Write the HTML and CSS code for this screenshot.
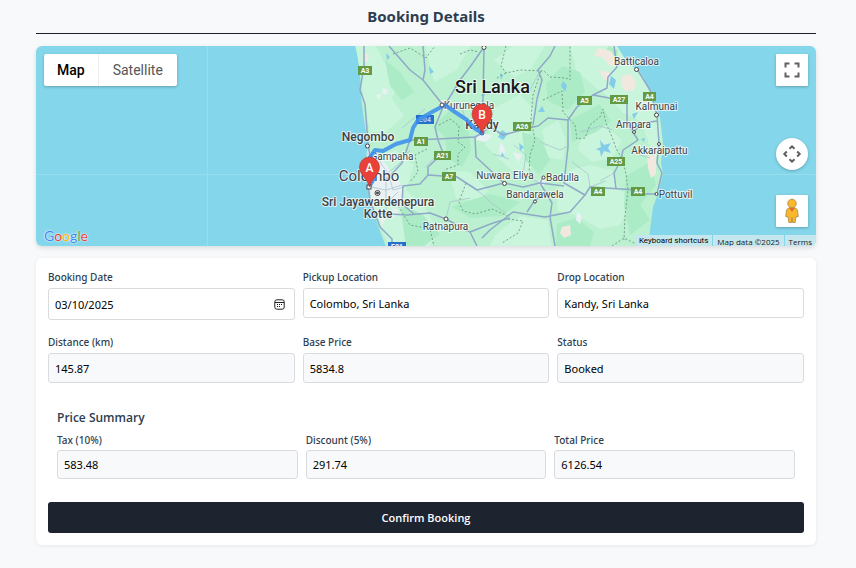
FILE: index.html
```html
<!DOCTYPE html>
<html lang="en">
<head>
<meta charset="utf-8">
<meta name="viewport" content="width=device-width, initial-scale=1">
<title>Booking Details</title>
<link rel="stylesheet" href="styles.css">
</head>
<body>
<main class="page">
  <h1 class="page-title">Booking Details</h1>

  <section class="map" aria-label="Route map">
    <svg class="map-canvas" viewBox="36 46 780 200" preserveAspectRatio="xMidYMid slice" role="img" aria-label="Route from Colombo to Kandy">
      <rect class="sea" x="-400" y="-100" width="1700" height="500"/>
      <path class="tile-line" d="M207.500 46V246M36 174.500H816"/>
      <path class="land" d="M355 46L358 58L360 70L361 97L364 120L367 137L367 150L365 173L368 188L370 197L377 223L386 247H648L650 230L653 207L658 194L663 174L661 163L663 143L660 117L650 90L643 76L637 70L631 69L625 60L617 46Z"/>
      <g class="land-light">
        <path d="M356 46H376L384 62L402 76L392 98L404 116L386 132L370 132L364 100L361 80Z"/>
        <path d="M425 46H470L457 70L434 82Z"/>
        <path d="M513 46H545L532 68L515 77L505 70L494 60Z"/>
        <path d="M570 46H617L627 62L640 72L652 98L660 127L662 150L650 148L642 122L622 112L608 96L596 88L576 70Z"/>
        <path d="M495 108L520 94L534 110L528 138L536 165L520 177L500 160L485 145Z"/>
        <path d="M542 130L558 120L566 140L563 160L548 158Z"/>
        <path d="M583 132L606 126L622 140L612 158L592 162L578 150Z"/>
        <path d="M570 170L590 165L612 170L620 190L632 200L620 225L600 229L575 215L557 211L558 190Z"/>
        <path d="M496 234L520 216L548 220L552 246H490Z"/>
        <path d="M372 158L395 150L414 165L406 190L424 206L438 232L430 246H389L377 220L370 197Z"/>
        <path d="M448 170L470 172L488 190L478 202L456 198Z"/>
      </g>
      <g class="land-deep">
        <path d="M452 108L468 128L471 150L462 167L447 158L445 137L434 126Z"/>
        <path d="M465 202L490 194L520 202L502 216L470 218L452 207Z"/>
        <path d="M546 84L562 66L580 72L585 92L568 110L548 101Z"/>
        <path d="M570 120L600 104L611 121L596 132L572 142Z"/>
        <path d="M626 176L650 162L656 185L640 205L650 220L630 235L624 205Z"/>
        <path d="M400 204L422 214L440 234L424 246H406Z"/>
        <path d="M522 132L540 138L550 160L539 174L525 160Z"/>
        <path d="M608 46L618 50L616 62L605 56Z"/>
        <path d="M385 60L400 72L414 92L402 100L390 86Z"/>
        <path d="M557 224L576 218L594 232L590 246H556Z"/>
      </g>
      <g class="sand">
        <path d="M598 48L611 51L619 64L610 66L602 57L594 56Z"/>
        <path d="M622 76L631 74L636 82L634 90L626 92L621 85Z"/>
        <path d="M599 70L609 72L611 83L604 79Z"/>
        <path d="M647 156L656 155L656 174L651 178L648 168Z"/>
        <path d="M562 227L570 225L571 235L564 238L560 233Z"/>
        <path d="M647 91L653 95L648 104L642 101Z"/>
        <path d="M364 52L369 56L367 63L363 60Z"/>
      </g>
      <g class="urban">
        <path d="M368 151L377 157L386 164L392 174L404 187L402 202L386 204L372 199L368 188Z"/>
        <path d="M478 132L493 136L485 142L476 140Z"/>
        <path d="M383 88L388 90L386 95L382 93ZM376 95L381 94L379 100ZM500 142L505 148L504 160L499 151ZM513 152L522 155L518 162ZM392 208L399 210L394 218ZM378 210L386 218L382 226ZM440 100L448 101L447 110L439 108ZM539 179L546 180L544 186L538 185ZM577 212L582 216L580 224L576 220Z"/>
      </g>
      <g class="water">
        <path d="M429 66L434 72L430 74ZM386 53L390 57L387 60ZM563 81L567 85L565 92L561 86ZM611 76L616 80L614 89L609 84ZM600 140L604 145L611 143L608 148L611 153L604 151L601 157L600 151L596 149L601 147ZM502 130L508 134L503 140L498 137ZM519 143L524 147L520 151ZM538 112L542 106L545 112ZM641 139L645 138L644 142ZM500 73L503 75L501 80ZM632 114L638 112L634 119ZM483 92L486 95L481 96ZM502 152L505 157L501 156Z"/>
      </g>
      <g class="borders">
        <path d="M393 54L410 48L426 58L435 46"/>
        <path d="M506 46L501 66L506 73L520 70L544 71L550 77L566 78L570 80V46"/>
        <path d="M460 54L470 50L479 52M497 78L506 73"/>
        <path d="M541 71L533 95L531 120L535 140L530 155L529 175"/>
        <path d="M543 100L562 91L563 112L575 125L577 139L585 138L590 125L600 117L603 109L606 123L612 137L616 148L623 161L626 174L628 190L625 216L624 240"/>
        <path d="M439 125L450 119L459 126L458 142L465 147L458 154L458 165L444 170"/>
        <path d="M427 149L415 155L418 172L410 182M466 183L459 202L463 211L475 214L492 209L508 216"/>
        <path d="M508 219L523 221L518 233L502 243M398 206L410 225L430 229L434 246M612 246L624 238L640 246"/>
      </g>
      <g class="minor-roads">
        <path d="M375 150L382 165L388 173L400 163L410 150M388 173L393 190L404 187M371 187L386 190L402 185M386 175V215M370 202L386 204L398 192"/>
        <path d="M425 109L402 128M438 154L425 168M462 107L466 123M487 94L510 89L529 92L540 71"/>
        <path d="M540 142L560 150L568 146M580 132L600 126L612 130M572 162L588 174L590 187M637 154L650 158M514 145L526 155L523 174L539 183M493 154L509 159"/>
        <path d="M446 219L450 202L470 198M477 190L494 205L506 213M590 187L606 181M614 173L600 181"/>
      </g>
      <g class="roads">
        <path d="M364 46V66L360 90L365 104L368 143L370 157L367 174L370 200L380 227L392 239V246"/>
        <path d="M389 46L410 70L423 80L443 105M423 46L425 70L423 80"/>
        <path d="M484 47L470 67L460 80L445 105M484 47L483 98L481 133"/>
        <path d="M443 107L435 127L438 140L443 153L428 167V175L420 184L403 186L402 204L414 214"/>
        <path d="M410 140L438 139L475 137L482 133M475 137L476 157L490 170L504 183"/>
        <path d="M386 180L402 163L410 140M428 175L457 177L477 190L504 183L523 187L540 183L543 177"/>
        <path d="M373 213L407 215L430 213L446 219L470 232L493 223L510 218M470 232L477 246"/>
        <path d="M555 46L550 56L538 70L542 80L537 99L533 125"/>
        <path d="M482 133L490 127L495 130L503 135L533 127L538 126L548 118L568 120L577 107L593 95L607 88L608 77L617 67L614 46"/>
        <path d="M593 95L620 100L627 103V123L633 132L638 140L623 150L621 160L614 173L616 188"/>
        <path d="M568 120V147L564 183L585 195L590 187L637 190L641 194H657"/>
        <path d="M637 69L650 90L657 115L659 143L657 163L662 173L657 194M657 121L643 123L633 132"/>
        <path d="M482 238L490 230L513 212L545 217L570 212L585 195M540 183L552 203L550 217L555 246M540 183L564 186M527 212L535 200L548 192"/>
      </g>
      <g class="shields">
        <rect x="358" y="66" width="14" height="9"/><text x="365" y="73">A3</text>
        <rect x="414" y="137" width="14" height="9"/><text x="421" y="144">A1</text>
        <rect x="434" y="151" width="17" height="9"/><text x="442.500" y="158">A21</text>
        <rect x="442" y="172" width="14" height="9"/><text x="449" y="179">A7</text>
        <rect x="513" y="122" width="18" height="9"/><text x="522" y="129">A26</text>
        <rect x="577" y="96" width="15" height="9"/><text x="584.500" y="103">A5</text>
        <rect x="610" y="95" width="18" height="9"/><text x="619" y="102">A27</text>
        <rect x="643" y="92" width="13" height="9"/><text x="649.500" y="99">A4</text>
        <rect x="607" y="157" width="18" height="9"/><text x="616" y="164">A25</text>
        <rect x="591" y="187" width="14" height="9"/><text x="598" y="194">A4</text>
        <rect x="631" y="187" width="14" height="9"/><text x="638" y="194">A4</text>
        <rect class="express" x="416" y="115" width="18" height="9"/><text class="express-text" x="425" y="122">E04</text>
        <rect class="express" x="388" y="242" width="18" height="9"/><text x="397" y="249">E01</text>
      </g>
      <g class="places">
        <text class="country" x="492.500" y="93">Sri Lanka</text>
        <text class="city" x="368" y="141">Negombo</text>
        <text class="capital" x="369" y="181">Colombo</text>
        <text class="city" x="378" y="206">Sri Jayawardenepura</text>
        <text class="city" x="378" y="218">Kotte</text>
        <text class="city" x="482" y="129">Kandy</text>
        <text x="469" y="109">Kurunegala</text>
        <text x="392" y="160">Gampaha</text>
        <text x="445.500" y="230">Ratnapura</text>
        <text x="505" y="179">Nuwara Eliya</text>
        <text x="562.500" y="181">Badulla</text>
        <text x="535" y="198">Bandarawela</text>
        <text x="636.500" y="65">Batticaloa</text>
        <text x="656.500" y="110">Kalmunai</text>
        <text x="633.500" y="128">Ampara</text>
        <text x="659.500" y="154">Akkaraipattu</text>
        <text x="675.500" y="198">Pottuvil</text>
      </g>
      <path class="route" d="M369 187L375 177L370 165V157L375 150L383 151L396 144L410 140L413 128L418 120L432 112L445 105L455 112L467 120L474 128L482 133"/>
      <g class="towns">
        <circle cx="367.500" cy="146" r="2"/><circle cx="442" cy="105" r="2"/><circle cx="484" cy="47.500" r="2"/>
        <circle cx="504.500" cy="183.500" r="2"/><circle cx="543.500" cy="177.500" r="1.500"/><circle cx="535" cy="201.500" r="1.500"/>
        <circle cx="446" cy="219" r="2"/><circle cx="636.500" cy="69.500" r="2"/><circle cx="656.500" cy="115" r="2"/>
        <circle cx="634" cy="132" r="1.500"/><circle cx="659" cy="144" r="1.500"/><circle cx="656.500" cy="194" r="1.500"/>
        <circle class="route-end" cx="482" cy="133" r="2"/><circle cx="377.500" cy="193" r="2.500"/><circle class="dot" cx="377.500" cy="193" r="1"/>
        <rect x="367" y="185" width="4" height="4"/>
      </g>
      <g class="pins">
        <path d="M369.500 187C368.500 180 359.500 175 359.500 167A10 10 0 0 1 379.500 167C379.500 175 370.500 180 369.500 187Z"/>
        <text x="369.500" y="172">A</text>
        <path d="M482 133.500C481 127 472 122 472 114A10 10 0 0 1 492 114C492 122 483 127 482 133.500Z"/>
        <text x="482" y="119">B</text>
      </g>
    </svg>

    <div class="map-types">
      <button type="button" class="map-type map-type-active">Map</button>
      <button type="button" class="map-type">Satellite</button>
    </div>

    <div class="map-controls">
      <button type="button" class="map-control" aria-label="Toggle fullscreen view">
        <svg width="16" height="16" viewBox="0 0 16 16"><path class="glyph" d="M1.500 5.500V1.500H5.500M10.500 1.500H14.500V5.500M14.500 10.500V14.500H10.500M5.500 14.500H1.500V10.500"/></svg>
      </button>
      <button type="button" class="map-control map-control-round" aria-label="Map camera controls">
        <svg width="20" height="20" viewBox="0 0 20 20"><path class="glyph" d="M7.500 4.800L10 2.300L12.500 4.800M15.200 7.500L17.700 10L15.200 12.500M12.500 15.200L10 17.700L7.500 15.200M4.800 12.500L2.300 10L4.800 7.500"/></svg>
      </button>
      <button type="button" class="map-control map-control-person" aria-label="Open Street View">
        <svg width="14" height="26" viewBox="0 0 14 26"><path class="person" d="M4 10Q1.500 10.500 1.300 13.500L.7 18.500L3.200 19L3.800 24.500H6.500L7 19.500L7.500 24.500H10.200L10.800 19L13.300 18.500L12.700 13.500Q12.500 10.500 10 10Z"/><path class="person-collar" d="M4 9.500H10L7 14Z"/><circle class="person" cx="7" cy="5.500" r="4.300"/></svg>
      </button>
    </div>

    <div class="google" aria-label="Google"><span class="g-blue">G</span><span class="g-red">o</span><span class="g-yellow">o</span><span class="g-blue">g</span><span class="g-green">l</span><span class="g-red">e</span></div>

    <div class="map-legal">
      <button type="button" class="legal-item legal-shortcuts">Keyboard shortcuts</button>
      <span class="legal-item">Map data ©2025</span>
      <a class="legal-item" href="#terms">Terms</a>
    </div>
  </section>

  <form class="card">
    <div class="fields">
      <div class="field">
        <label for="date">Booking Date</label>
        <div class="date-box">
          <input id="date" class="date-input" type="text" value="03/10/2025">
          <button type="button" class="date-button" aria-label="Choose date">
            <svg width="11" height="11" viewBox="0 0 11 11"><rect class="cal-frame" x=".8" y=".8" width="9.400" height="9.400" rx="2"/><path class="cal-frame" d="M1 3.500H10"/><path class="cal-dots" d="M3 5H4V6H3ZM5 5H6V6H5ZM7 5H8V6H7ZM3 7H4V8H3ZM5 7H6V8H5Z"/></svg>
          </button>
        </div>
      </div>
      <div class="field">
        <label for="pickup">Pickup Location</label>
        <input id="pickup" class="input" type="text" value="Colombo, Sri Lanka">
      </div>
      <div class="field">
        <label for="drop">Drop Location</label>
        <input id="drop" class="input" type="text" value="Kandy, Sri Lanka">
      </div>
      <div class="field">
        <label for="distance">Distance (km)</label>
        <input id="distance" class="input" type="text" value="145.87" readonly>
      </div>
      <div class="field">
        <label for="base">Base Price</label>
        <input id="base" class="input" type="text" value="5834.8" readonly>
      </div>
      <div class="field">
        <label for="status">Status</label>
        <input id="status" class="input" type="text" value="Booked" readonly>
      </div>
    </div>

    <section class="summary">
      <h2 class="summary-title">Price Summary</h2>
      <div class="fields">
        <div class="field">
          <label for="tax">Tax (10%)</label>
          <input id="tax" class="input" type="text" value="583.48" readonly>
        </div>
        <div class="field">
          <label for="discount">Discount (5%)</label>
          <input id="discount" class="input" type="text" value="291.74" readonly>
        </div>
        <div class="field">
          <label for="total">Total Price</label>
          <input id="total" class="input" type="text" value="6126.54" readonly>
        </div>
      </div>
    </section>

    <button type="submit" class="confirm">Confirm Booking</button>
  </form>
</main>
</body>
</html>
```
FILE: styles.css
```css
* {
  box-sizing: border-box;
}

body {
  margin: 0;
  background: #f8f9fb;
  color: #2c3e50;
  font-family: "Noto Sans", "Open Sans", sans-serif;
}

button,
input {
  font-family: inherit;
}

.page {
  padding: 4px 40px 20px 36px;
}

.page-title {
  margin: 0 0 12px;
  padding-bottom: 5px;
  border-bottom: 1px solid #1e1e2e;
  font-size: 15px;
  font-weight: 700;
  line-height: 24px;
  text-align: center;
}

/* Map */

.map {
  position: relative;
  height: 200px;
  margin-bottom: 12px;
  overflow: hidden;
  border-radius: 6px;
  box-shadow: 0 2px 5px rgba(0, 0, 0, 0.12);
  font-family: Roboto, sans-serif;
}

.map-canvas {
  display: block;
  width: 100%;
  height: 100%;
}

.sea { fill: #84d6ea; }
.land { fill: #bbf0d0; }
.land-light { fill: #c8f5dc; }
.land-deep { fill: #abebc5; }
.sand { fill: #f1e9df; }
.urban { fill: #e9f1f3; }
.water { fill: #84cdea; }

.tile-line {
  fill: none;
  stroke: #98dded;
}

.borders {
  fill: none;
  stroke: #74a18a;
  stroke-dasharray: 2 2;
}

.minor-roads {
  fill: none;
  stroke: #a8c5cf;
  stroke-width: 0.8;
}

.roads {
  fill: none;
  stroke: #8fa9c8;
  stroke-width: 1.5;
  stroke-linejoin: round;
}

.route {
  fill: none;
  stroke: #3d8fee;
  stroke-opacity: 0.88;
  stroke-width: 4;
  stroke-linecap: round;
  stroke-linejoin: round;
}

.shields rect { fill: #629b43; }
.shields .express { fill: #246fc9; }

.shields text {
  fill: #fff;
  font-size: 7px;
  font-weight: 700;
  text-anchor: middle;
}

.shields .express-text { fill: #a9d3ff; }

.towns {
  fill: #fff;
  stroke: #444;
  stroke-width: 1;
}

.towns .dot { fill: #333; }

.towns .route-end {
  fill: #5aa5f0;
  stroke: #2a6fb8;
}

.places text {
  fill: #3c4247;
  stroke: #fff;
  stroke-opacity: 0.7;
  stroke-width: 2;
  stroke-linejoin: round;
  paint-order: stroke;
  font-size: 10px;
  text-anchor: middle;
}

.places .city {
  font-size: 12px;
  font-weight: 500;
}

.places .capital { font-size: 15px; }

.places .country {
  fill: #181b1d;
  font-size: 18px;
  font-weight: 500;
}

.pins path {
  fill: #e8413a;
  stroke: #bb2822;
  stroke-width: 0.6;
}

.pins text {
  fill: #fff;
  font-size: 12px;
  font-weight: 500;
  text-anchor: middle;
}

.map-types {
  position: absolute;
  top: 8px;
  left: 8px;
  display: flex;
  border-radius: 2px;
  background: #fff;
  box-shadow: 0 1px 3px rgba(0, 0, 0, 0.25);
}

.map-type {
  height: 32px;
  padding: 0 13px;
  border: 0;
  background: none;
  color: #565656;
  font-size: 14px;
}

.map-type + .map-type {
  padding: 0 14px;
  border-left: 1px solid #eee;
}

.map-type-active {
  color: #000;
  font-weight: 500;
}

.map-controls {
  position: absolute;
  top: 8px;
  right: 8px;
  display: flex;
  flex-direction: column;
}

.map-control {
  display: grid;
  place-items: center;
  width: 32px;
  height: 32px;
  padding: 0;
  border: 0;
  border-radius: 1px;
  background: #fff;
  box-shadow: 0 1px 3px rgba(0, 0, 0, 0.25);
}

.map-control-round {
  margin-top: 52px;
  border-radius: 50%;
}

.map-control-person { margin-top: 25px; }

.glyph {
  fill: none;
  stroke: #606060;
  stroke-width: 2;
}

.person {
  fill: #f9b72b;
  stroke: #a9873c;
  stroke-width: 0.8;
}

.person-collar { fill: #e5682d; }

.google {
  position: absolute;
  bottom: 1px;
  left: 8px;
  font-family: Lato, sans-serif;
  font-size: 14px;
  line-height: 18px;
  text-shadow: 0 0 1px #fff, 0 0 2px #fff;
}

.g-blue { color: #4285f4; }
.g-red { color: #ea4335; }
.g-yellow { color: #f5b800; }
.g-green { color: #34a853; }

.map-legal {
  position: absolute;
  right: 0;
  bottom: 0;
  display: flex;
  height: 11px;
  gap: 1px;
}

.legal-item {
  padding: 0 4px;
  border: 0;
  background: #c4e7ef;
  color: #1c2022;
  font-family: "Open Sans", sans-serif;
  font-size: 8px;
  line-height: 14px;
  text-decoration: none;
  white-space: nowrap;
}

.legal-shortcuts {
  color: #000;
  font-family: Roboto, sans-serif;
  line-height: 12px;
}

/* Booking form */

.card {
  padding: 12px;
  border-radius: 6px;
  background: #fff;
  box-shadow: 0 1px 4px rgba(0, 0, 0, 0.07);
}

.fields {
  display: grid;
  grid-template-columns: repeat(3, 1fr);
  gap: 15px 8px;
  align-items: start;
}

.field {
  display: flex;
  flex-direction: column;
  gap: 4px;
  min-width: 0;
}

.field label {
  font-size: 10px;
  font-weight: 500;
  line-height: 14px;
}

.input,
.date-box {
  width: 100%;
  height: 30px;
  border: 1px solid #d9dbde;
  border-radius: 3px;
  background: #fff;
}

.input,
.date-input {
  padding: 1px 6px 0;
  color: #000;
  font-size: 11px;
}

.input:read-only { background: #f8f9fb; }

.date-box {
  display: flex;
  height: 32px;
  padding-right: 9px;
}

.date-input {
  flex: 1;
  min-width: 0;
  border: 0;
  background: none;
}

.date-button {
  display: grid;
  place-items: center;
  padding: 0;
  border: 0;
  background: none;
}

.cal-frame {
  fill: none;
  stroke: #222;
}

.cal-dots { fill: #111; }

.summary {
  padding: 26px 9px 23px;
}

.summary-title {
  margin: 0 0 6px;
  font-family: "Open Sans", sans-serif;
  font-size: 12px;
  font-weight: 600;
  line-height: 18px;
}

.summary .field { gap: 3px; }

.summary .input {
  height: 29px;
  padding-top: 0;
}

.confirm {
  display: block;
  width: 100%;
  height: 31px;
  border: 0;
  border-radius: 3px;
  background: #1e2330;
  color: #fff;
  font-family: "Open Sans", sans-serif;
  font-size: 11px;
  font-weight: 600;
}
```
